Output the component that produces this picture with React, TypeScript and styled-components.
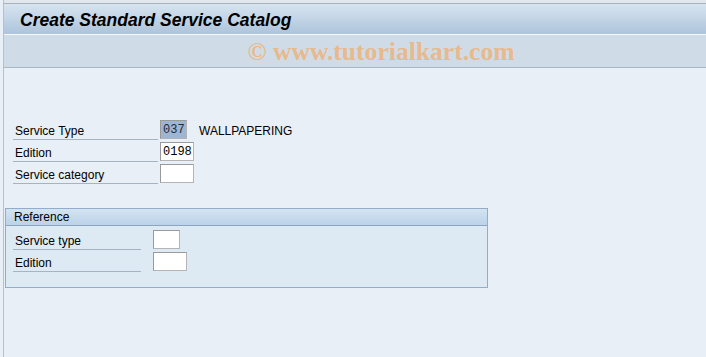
import React from "react";
import styled, { createGlobalStyle } from "styled-components";

const Global = createGlobalStyle`
  html, body { margin: 0; padding: 0; }
  body {
    width: 706px;
    height: 357px;
    overflow: hidden;
    background: #e8eff6;
    font-family: "Liberation Sans", Arial, sans-serif;
  }
`;

const Frame = styled.div`
  width: 702px;
  height: 357px;
  margin-left: 3px;
  border-left: 1px solid #b7c1cb;
  display: flex;
  flex-direction: column;
  background: #e8eff6;
`;

const TopStrip = styled.div`
  height: 3px;
  background: #e2e7ed;
  border-bottom: 1px solid #a7b2be;
`;

const TitleBar = styled.div`
  height: 30px;
  background: linear-gradient(#d7e4f0, #adc4db);
  border-bottom: 1px solid #f4f8fb;
  display: flex;
  align-items: center;
  padding-left: 16px;
`;

const Title = styled.h1`
  margin: 0;
  font-family: "Liberation Sans", Arial, sans-serif;
  font-size: 17.5px;
  font-weight: bold;
  font-style: italic;
  color: #000;
  transform: translateY(1px);
`;

const Toolbar = styled.div`
  height: 32px;
  background: #cfdce8;
  border-bottom: 1px solid #a9b6c3;
  display: flex;
  align-items: center;
  justify-content: center;
  padding-left: 52px;
`;

const Watermark = styled.span`
  font-family: "Liberation Serif", "Times New Roman", serif;
  font-weight: bold;
  font-size: 25.6px;
  color: #e8b98c;
  white-space: nowrap;
  transform: translateY(1px);
`;

const Body = styled.div`
  flex: 1;
  padding: 50px 0 0 9px;
  display: flex;
  flex-direction: column;
`;

const Form = styled.div`
  display: flex;
  flex-direction: column;
`;

const Row = styled.div<{ $labelWidth: number; $gap: number }>`
  display: grid;
  grid-template-columns: ${(p) => p.$labelWidth}px auto 1fr;
  column-gap: ${(p) => p.$gap}px;
  height: 22px;
  align-items: start;
`;

const Label = styled.div`
  height: 20px;
  padding-bottom: 1px;
  border-bottom: 1px solid #a6b3c1;
  padding-left: 2px;
  display: flex;
  align-items: flex-end;
  font-size: 12px;
  line-height: 14px;
  color: #000;
  white-space: nowrap;
`;

const Field = styled.div<{ $w: number; $filled?: boolean }>`
  box-sizing: border-box;
  margin-top: 2px;
  width: ${(p) => p.$w}px;
  height: 19px;
  background: ${(p) => (p.$filled ? "#9fb6d2" : "#ffffff")};
  border: 1px solid #b4b4b4;
  border-top-color: #9a9a9a;
  border-left-color: #9a9a9a;
  font-family: "Liberation Mono", "Courier New", monospace;
  font-size: 12px;
  line-height: 18px;
  padding-left: 2px;
  color: ${(p) => (p.$filled ? "#1d2b3a" : "#000")};
`;

const ValueText = styled.div`
  height: 20px;
  padding-bottom: 1px;
  display: flex;
  align-items: flex-end;
  font-size: 12px;
  line-height: 14px;
  padding-left: 10px;
  color: #000;
  white-space: nowrap;
`;

const Group = styled.div`
  margin-top: 24px;
  margin-left: -8px;
  width: 483px;
  height: 80px;
  box-sizing: border-box;
  border: 1px solid #93acc7;
  background: #dde9f3;
  display: flex;
  flex-direction: column;
`;

const GroupHeader = styled.div`
  height: 16px;
  background: linear-gradient(#d4e4f2, #bcd2e8);
  border-bottom: 1px solid #8da5bf;
  padding-left: 8px;
  font-size: 12px;
  line-height: 16px;
  color: #000;
`;

const GroupBody = styled.div`
  padding: 2px 0 0 7px;
  display: flex;
  flex-direction: column;
`;

export default function App() {
  return (
    <>
      <Global />
      <Frame>
        <TopStrip />
        <TitleBar>
          <Title>Create Standard Service Catalog</Title>
        </TitleBar>
        <Toolbar>
          <Watermark>© www.tutorialkart.com</Watermark>
        </Toolbar>
        <Body>
          <Form>
            <Row $labelWidth={145} $gap={2}>
              <Label>Service Type</Label>
              <Field $w={27} $filled>037</Field>
              <ValueText>WALLPAPERING</ValueText>
            </Row>
            <Row $labelWidth={145} $gap={2}>
              <Label>Edition</Label>
              <Field $w={34}>0198</Field>
            </Row>
            <Row $labelWidth={145} $gap={2}>
              <Label>Service category</Label>
              <Field $w={34} />
            </Row>
          </Form>
          <Group>
            <GroupHeader>Reference</GroupHeader>
            <GroupBody>
              <Row $labelWidth={128} $gap={12}>
                <Label>Service type</Label>
                <Field $w={27} />
              </Row>
              <Row $labelWidth={128} $gap={12}>
                <Label>Edition</Label>
                <Field $w={34} />
              </Row>
            </GroupBody>
          </Group>
        </Body>
      </Frame>
    </>
  );
}
